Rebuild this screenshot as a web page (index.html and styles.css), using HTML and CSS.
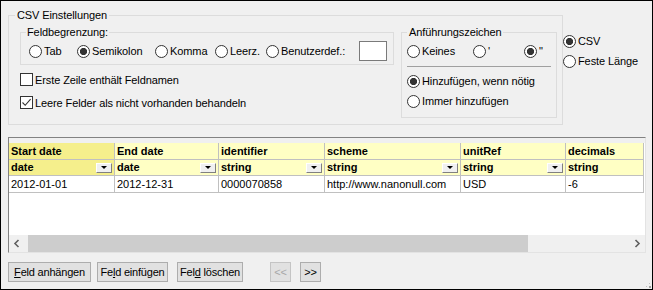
FILE: index.html
```html
<!DOCTYPE html>
<html lang="de">
<head>
  <meta charset="UTF-8">
  <title>CSV Einstellungen</title>
  <link rel="stylesheet" href="styles.css">
</head>
<body>

  <div class="window">
    <div class="top">
      <fieldset class="group group-main">
        <legend>CSV Einstellungen</legend>
        <div class="main-cols">
          <div class="left-col">
            <fieldset class="group group-sep">
              <legend>Feldbegrenzung:</legend>
              <div class="opt-row">
                <label class="opt w-tab"><span class="radio"></span>Tab</label>
                <label class="opt w-semi"><span class="radio on"></span>Semikolon</label>
                <label class="opt w-komma"><span class="radio"></span>Komma</label>
                <label class="opt w-leer"><span class="radio"></span>Leerz.</label>
                <label class="opt w-user"><span class="radio"></span>Benutzerdef.:</label>
                <span class="textbox"></span>
              </div>
            </fieldset>
            <label class="check-row"><span class="check"></span>Erste Zeile enthält Feldnamen</label>
            <label class="check-row">
              <span class="check"><svg width="11" height="11" viewBox="0 0 11 11"><path d="M1.5 5.5 L4.2 8.3 L9.6 2.2" fill="none" stroke="#333" stroke-width="1.1"/></svg></span>Leere Felder als nicht vorhanden behandeln
            </label>
          </div>

          <fieldset class="group group-quote">
            <legend>Anführungszeichen</legend>
            <div class="opt-row">
              <label class="opt w-none"><span class="radio"></span>Keines</label>
              <label class="opt w-single"><span class="radio"></span>'</label>
              <label class="opt"><span class="radio on"></span>"</label>
            </div>
            <div class="sep-line"></div>
            <label class="opt"><span class="radio on"></span>Hinzufügen, wenn nötig</label>
            <label class="opt"><span class="radio"></span>Immer hinzufügen</label>
          </fieldset>
        </div>
      </fieldset>

      <div class="format-col">
        <label class="opt"><span class="radio on"></span>CSV</label>
        <label class="opt"><span class="radio"></span>Feste Länge</label>
      </div>
    </div>

    <div class="grid">
      <div class="sheet">
        <div class="row head h1">
          <div class="cell sel">Start date</div>
          <div class="cell">End date</div>
          <div class="cell">identifier</div>
          <div class="cell">scheme</div>
          <div class="cell">unitRef</div>
          <div class="cell">decimals</div>
        </div>
        <div class="row head h2">
          <div class="cell sel">date<span class="dd"></span></div>
          <div class="cell">date<span class="dd"></span></div>
          <div class="cell">string<span class="dd"></span></div>
          <div class="cell">string<span class="dd"></span></div>
          <div class="cell">string<span class="dd"></span></div>
          <div class="cell">string</div>
        </div>
        <div class="row data">
          <div class="cell">2012-01-01</div>
          <div class="cell">2012-12-31</div>
          <div class="cell">0000070858</div>
          <div class="cell">http://www.nanonull.com</div>
          <div class="cell">USD</div>
          <div class="cell">-6</div>
        </div>
      </div>
      <div class="hscroll">
        <span class="sb-btn"><svg width="17" height="17" viewBox="0 0 17 17"><path d="M9.5 5 L6 8.5 L9.5 12" fill="none" stroke="#606060" stroke-width="1.6"/></svg></span>
        <span class="sb-thumb"></span>
        <span class="sb-track"></span>
        <span class="sb-btn"><svg width="17" height="17" viewBox="0 0 17 17"><path d="M7.5 5 L11 8.5 L7.5 12" fill="none" stroke="#606060" stroke-width="1.6"/></svg></span>
      </div>
    </div>

    <div class="buttons">
      <button class="btn b-append"><u>F</u>eld anhängen</button>
      <button class="btn b-insert">Fe<u>l</u>d einfügen</button>
      <button class="btn b-delete">Fel<u>d</u> löschen</button>
      <button class="btn b-nav b-prev" disabled>&lt;&lt;</button>
      <button class="btn b-nav b-next">&gt;&gt;</button>
    </div>

    <svg class="grip" width="5" height="5" viewBox="0 0 5 5">
      <rect x="3" y="3" width="2" height="2" fill="#a0a0a0"/>
      <rect x="0" y="3" width="1" height="1" fill="#c0c0c0"/>
      <rect x="3" y="0" width="1" height="1" fill="#c0c0c0"/>
    </svg>
  </div>
</body>
</html>
```

FILE: styles.css
```css
body {
  margin: 0;
  font-family: "Liberation Sans", Arial, sans-serif;
  font-size: 11px;
  color: #000;
}

.window {
  position: relative;
  width: 653px;
  height: 290px;
  box-sizing: border-box;
  border: 1px solid #000;
  background: #f0f0f0;
  padding: 7px 6px 0 7px;
  letter-spacing: -0.1px;
}

.top {
  display: flex;
  align-items: flex-start;
}

.group {
  margin: 0;
  border: 1px solid #dcdcdc;
  min-width: 0;
}

.group legend {
  line-height: 14px;
  padding: 0 2px;
}

.group-main {
  width: 555px;
  box-sizing: border-box;
  padding: 3px 5px 6px 11px;
}

.group-main > legend {
  margin-left: -5px;
}

.main-cols {
  display: flex;
  align-items: flex-start;
}

.left-col {
  width: 374px;
}

.group-sep {
  width: 374px;
  box-sizing: border-box;
  padding: 2px 0 3px 8px;
}

.group-sep > legend {
  padding: 0 1px;
  margin-left: -3px;
}

.opt-row {
  display: flex;
  align-items: center;
  height: 20px;
}

.opt {
  display: flex;
  align-items: center;
  height: 20px;
  white-space: nowrap;
}

.radio {
  flex: none;
  width: 13px;
  height: 13px;
  box-sizing: border-box;
  border: 1px solid #333;
  border-radius: 50%;
  background: #fff;
  margin-right: 2px;
}

.radio.on {
  background: radial-gradient(circle, #333 3.3px, #fff 3.9px);
}

.w-tab { width: 48px; }
.w-semi { width: 78px; }
.w-komma { width: 60px; }
.w-leer { width: 51px; }
.w-user { width: 93px; }

.textbox {
  width: 28px;
  height: 20px;
  box-sizing: border-box;
  border: 1px solid #7a7a7a;
  background: #fff;
}

.check-row {
  display: flex;
  align-items: center;
  height: 17px;
  margin-top: 6px;
  white-space: nowrap;
}

.check {
  flex: none;
  width: 13px;
  height: 13px;
  box-sizing: border-box;
  border: 1px solid #333;
  background: #fff;
  margin-right: 2px;
}

.check svg {
  display: block;
}

.group-quote {
  width: 156px;
  box-sizing: border-box;
  margin-left: 7px;
  padding: 2px 0 6px 5px;
}

.w-none { width: 66px; }
.w-single { width: 51px; }

.sep-line {
  width: 144px;
  border-top: 1px solid #a0a0a0;
  margin: 5px 0 4px 0;
}

.format-col {
  margin-top: 23px;
}

/* grid */
.grid {
  margin-top: 12px;
  width: 638px;
  height: 116px;
  box-sizing: border-box;
  border: 1px solid;
  border-color: #828282 #e3e3e3 #e3e3e3 #828282;
  background: #f0f0f0;
  padding-top: 5px;
  display: flex;
  flex-direction: column;
  letter-spacing: 0;
}

.sheet {
  flex: 1;
  background: #fff;
}

.row {
  display: grid;
  grid-template-columns: 106px 104px 106px 136px 105px 78px;
}

.cell {
  box-sizing: border-box;
  border-right: 1px solid #c0c0c0;
  border-bottom: 1px solid #c0c0c0;
  padding-left: 2px;
  overflow: hidden;
  white-space: nowrap;
}

.head .cell {
  background: #ffffc4;
  font-weight: bold;
}

.head .cell.sel {
  background: #f5ef8c;
}

.h1 .cell {
  height: 17px;
  line-height: 16px;
}

.h2 .cell {
  height: 16px;
  line-height: 15px;
  display: flex;
  justify-content: space-between;
  align-items: center;
}

.data .cell {
  height: 17px;
  line-height: 16px;
}

.dd {
  width: 16px;
  height: 10px;
  box-sizing: border-box;
  border: 1px solid;
  border-color: #fff #808080 #808080 #fff;
  background: #f0f0f0;
  margin-right: 2px;
  display: flex;
  justify-content: center;
  align-items: center;
}

.dd::before {
  content: "";
  border-left: 3px solid transparent;
  border-right: 3px solid transparent;
  border-top: 3px solid #000;
}

.hscroll {
  display: flex;
  height: 17px;
  background: #f0f0f0;
}

.sb-btn {
  width: 17px;
}

.sb-btn svg {
  display: block;
}

.sb-thumb {
  width: 500px;
  margin-left: 2px;
  background: #cdcdcd;
}

.sb-track {
  flex: 1;
}

/* buttons */
.buttons {
  display: flex;
  margin-top: 9px;
}

.btn {
  height: 20px;
  box-sizing: border-box;
  border: 1px solid #adadad;
  background: #e1e1e1;
  font-family: "Liberation Sans", Arial, sans-serif;
  font-size: 11px;
  letter-spacing: -0.2px;
  color: #000;
  padding: 0;
}

.btn:disabled {
  border-color: #c4c4c4;
  color: #a8a8a8;
}

.b-append { width: 83px; }
.b-insert { width: 71px; margin-left: 6px; }
.b-delete { width: 66px; margin-left: 9px; }
.b-nav { width: 21px; }
.b-prev { margin-left: 27px; }
.b-next { margin-left: 9px; }

.grip {
  position: absolute;
  right: 1px;
  bottom: 1px;
}
```
